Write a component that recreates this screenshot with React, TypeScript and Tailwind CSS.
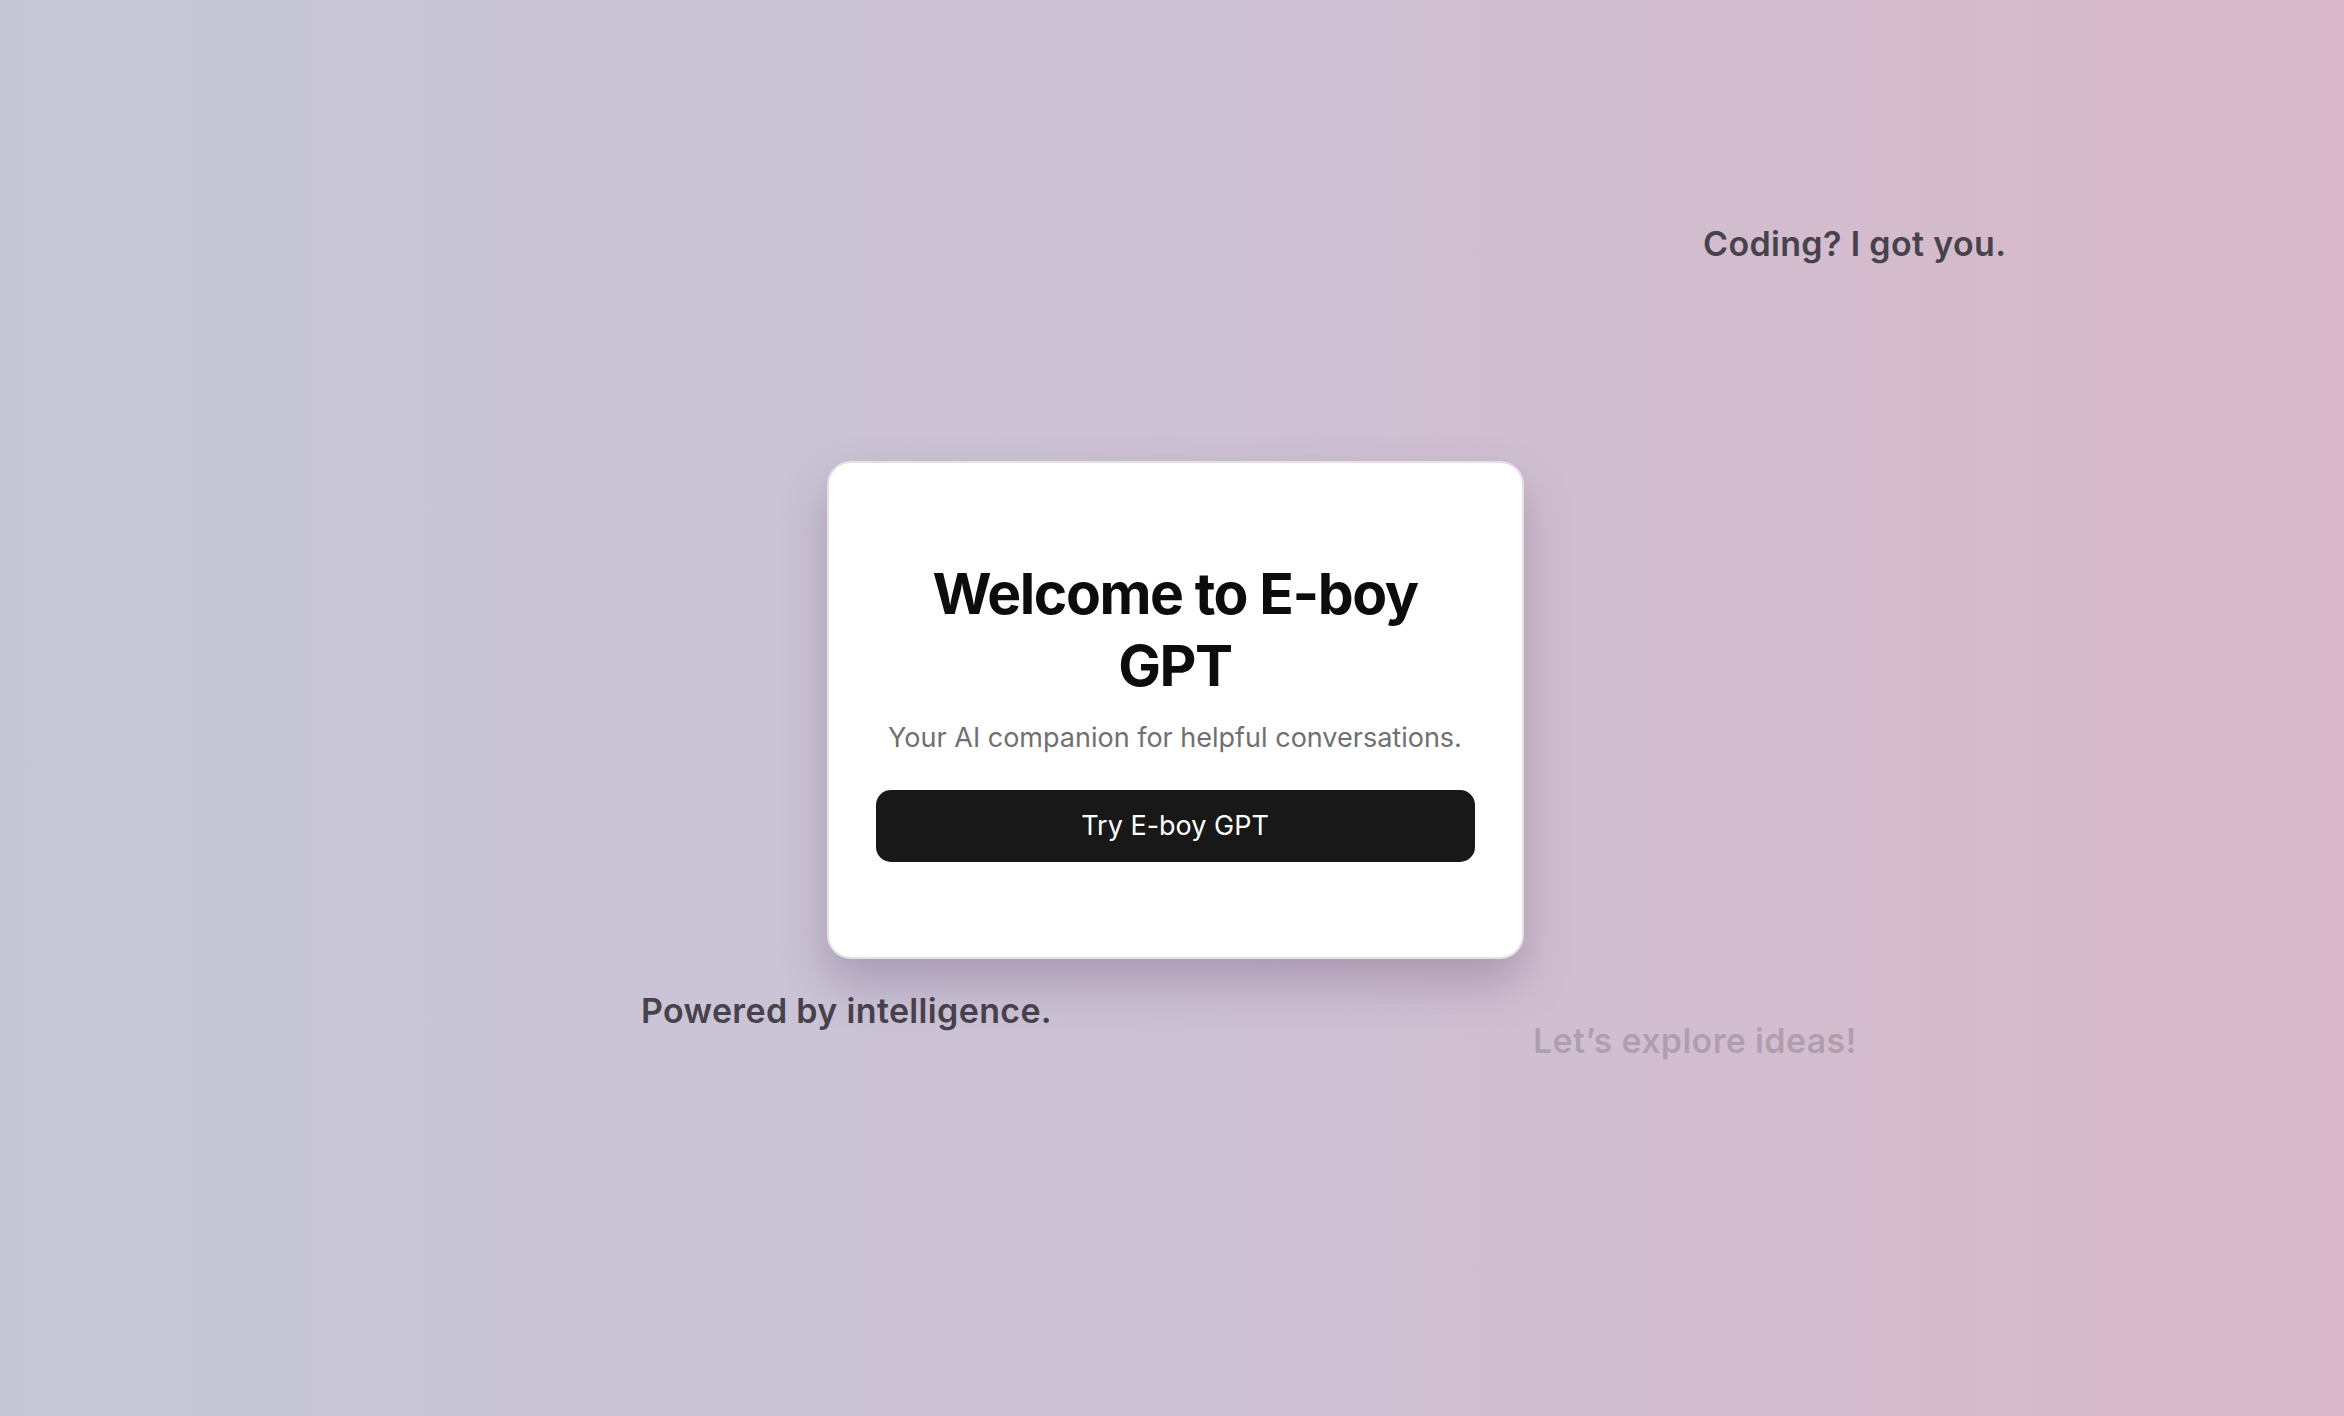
const App = () => {
    return (
        <div className="relative min-h-screen h-[1416px] w-full overflow-hidden bg-gradient-to-r from-[#c5c7d7] via-[#cdc2d5] to-[#d8b8c8] flex items-center justify-center font-['Inter','Liberation_Sans',sans-serif]">
            <span className="absolute left-[1703px] top-[224px] text-[34px] leading-[40px] tracking-[0.01em] font-semibold text-[#47424b]">
                Coding? I got you.
            </span>
            <span className="absolute left-[641px] top-[991px] text-[34px] leading-[40px] tracking-[0.01em] font-semibold text-[#47424b]">
                Powered by intelligence.
            </span>
            <span className="absolute left-[1533px] top-[1021px] text-[34px] leading-[40px] tracking-[0.01em] font-semibold text-[#47424b]/25">
                Let’s explore ideas!
            </span>

            <div className="relative ml-[6px] mt-[4px] w-[697px] bg-white rounded-[24px] border-2 border-[#e2e2e4] shadow-[0_24px_48px_rgba(90,60,100,0.3)] px-[47px] py-[95px] flex flex-col items-center text-center">
                <h1 className="text-[57px] leading-[72px] font-bold tracking-tight text-[#0c0c0c]">
                    Welcome to E-boy
                    <br />
                    GPT
                </h1>
                <p className="mt-[16px] text-[27px] leading-[40px] text-[#707070]">
                    Your AI companion for helpful conversations.
                </p>
                <button className="mt-[32px] w-full h-[72px] rounded-[15px] bg-[#181818] text-white text-[27px] font-normal">
                    Try E-boy GPT
                </button>
            </div>
        </div>
    );
};

export default App;
